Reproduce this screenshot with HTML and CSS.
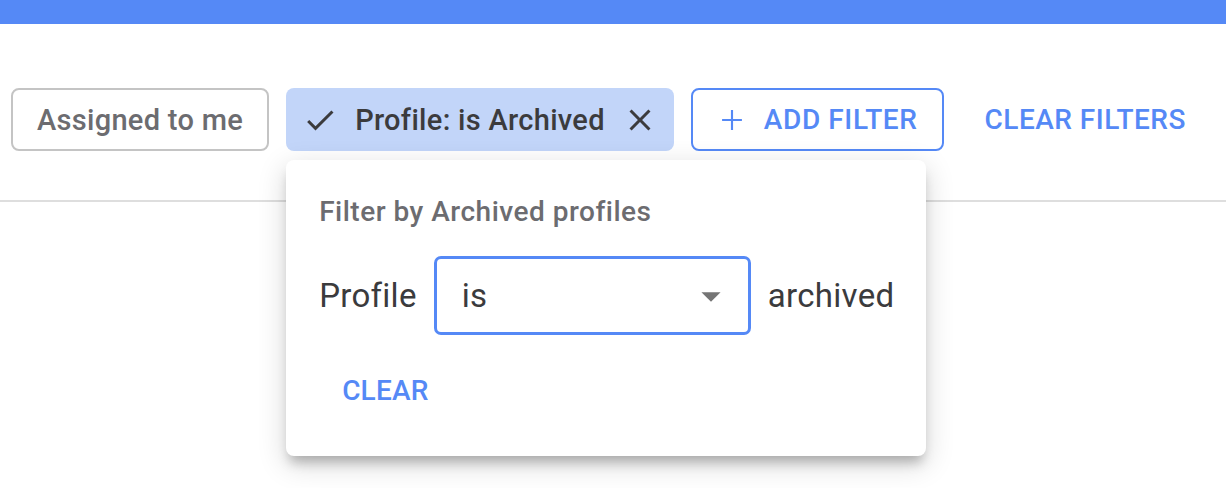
FILE: index.html
```html
<!DOCTYPE html>
<html lang="en">
	<head>
		<meta charset="UTF-8" />
		<meta name="viewport" content="width=device-width, initial-scale=1.0" />
		<title>Filters</title>
		<link rel="stylesheet" href="styles.css">
	</head>
	<body>
		<div class="app-bar"></div>

		<div class="toolbar">
			<button class="chip chip-outlined">Assigned to me</button>

			<div class="chip-wrap">
				<button class="chip chip-active">
					<svg class="chip-icon" viewBox="0 0 24 24"><path d="M9 16.17L4.83 12l-1.42 1.41L9 19 21 7l-1.41-1.41z"/></svg>
					<span>Profile: is Archived</span>
					<svg class="chip-icon" viewBox="0 0 24 24"><path d="M19 6.41L17.59 5 12 10.59 6.41 5 5 6.41 10.59 12 5 17.59 6.41 19 12 13.41 17.59 19 19 17.59 13.41 12z"/></svg>
				</button>

				<!-- popover for the active filter -->
				<div class="popover">
					<div class="popover-title">Filter by Archived profiles</div>
					<div class="popover-row">
						<span>Profile</span>
						<div class="select">
							<span>is</span>
							<svg class="select-arrow" viewBox="0 0 24 24"><path d="M7 10l5 5 5-5z"/></svg>
						</div>
						<span>archived</span>
					</div>
					<button class="text-button popover-clear">Clear</button>
				</div>
			</div>

			<button class="chip chip-add">
				<svg class="add-icon" viewBox="0 0 24 24"><path d="M19 12.75h-6.25V19h-1.5v-6.25H5v-1.5h6.25V5h1.5v6.25H19z"/></svg>
				<span>Add filter</span>
			</button>

			<button class="text-button clear-all">Clear filters</button>
		</div>

		<div class="divider"></div>
	</body>
</html>
```

FILE: styles.css
```css
html,
body {
	min-height: 100vh;
}
body {
	margin: 0;
	font-family: Roboto, "Liberation Sans", Arial, sans-serif;
	background: #fff;
}
button {
	font-family: inherit;
	cursor: pointer;
}
.app-bar {
	height: 24px;
	background-color: #5589f6;
}
.toolbar {
	display: flex;
	align-items: center;
	padding: 64px 11px 49px;
	gap: 17px;
}
.chip {
	display: flex;
	align-items: center;
	box-sizing: border-box;
	height: 63px;
	margin: 0;
	border-radius: 8px;
	font-size: 29px;
	font-weight: 500;
	line-height: 32px;
	background: #fff;
}
.chip-outlined {
	padding: 0 24px;
	border: 2px solid #c4c4c4;
	color: #6c6c70;
	letter-spacing: 0.3px;
}
.chip-wrap {
	position: relative;
}
.chip-active {
	padding: 0 16px;
	gap: 17px;
	border: none;
	background-color: #c2d5f9;
	color: #3b3b3d;
	letter-spacing: 0.3px;
}
.chip-icon {
	width: 36px;
	height: 36px;
	fill: #3b3b3d;
}
.chip-add {
	padding: 0 24px 0 22px;
	gap: 15px;
	border: 2px solid #5589f6;
	font-size: 28px;
	color: #5589f6;
	text-transform: uppercase;
	letter-spacing: 0.6px;
}
.add-icon {
	width: 34px;
	height: 34px;
	fill: #5589f6;
}
.text-button {
	padding: 12px 24px;
	border: none;
	border-radius: 6px;
	background: none;
	color: #5589f6;
	font-size: 28px;
	font-weight: 500;
	line-height: 32px;
	letter-spacing: 0.5px;
	text-transform: uppercase;
}
.clear-all {
	padding: 12px 20px 12px 24px;
}
.divider {
	height: 2px;
	background-color: #dedede;
}
.popover {
	position: absolute;
	top: calc(100% + 9px);
	left: 0;
	z-index: 10;
	width: 640px;
	box-sizing: border-box;
	padding: 36px 33px 37px;
	display: flex;
	flex-direction: column;
	align-items: flex-start;
	gap: 28px;
	background: #fff;
	border-radius: 8px;
	box-shadow: 0 10px 12px -4px rgba(0, 0, 0, 0.25), 0 8px 28px 2px rgba(0, 0, 0, 0.14);
}
.popover-title {
	font-size: 28px;
	font-weight: 500;
	line-height: 32px;
	color: #6c6c70;
	letter-spacing: 0.5px;
}
.popover-row {
	display: flex;
	align-items: center;
	gap: 17px;
	font-size: 33px;
	letter-spacing: 0.3px;
	color: #3b3b3d;
}
.select {
	display: flex;
	align-items: center;
	justify-content: space-between;
	box-sizing: border-box;
	width: 317px;
	height: 79px;
	padding: 0 14px 0 25px;
	border: 3px solid #5589f6;
	border-radius: 7px;
}
.select-arrow {
	width: 46px;
	height: 46px;
	fill: #757575;
}
.popover-clear {
	padding-left: 23px;
	letter-spacing: 0.2px;
}
```
